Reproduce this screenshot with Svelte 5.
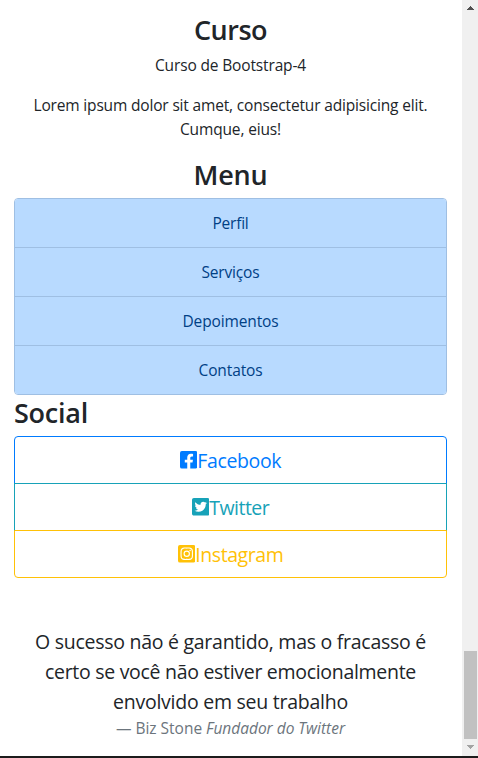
<script>
  const menu = [
    { label: 'Perfil', width: 36 },
    { label: 'Serviços', width: 58 },
    { label: 'Depoimentos', width: 96 },
    { label: 'Contatos', width: 64 },
  ];

  const social = [
    {
      name: 'Facebook',
      kind: 'primary',
      width: 84,
      path: 'M400 32H48A48 48 0 0 0 0 80v352a48 48 0 0 0 48 48h137.25V327.69h-63V256h63v-54.64c0-62.15 37-96.48 93.67-96.48 27.14 0 55.52 4.84 55.52 4.84v61h-31.27c-30.81 0-40.42 19.12-40.42 38.73V256h68.78l-11 71.69h-57.78V480H400a48 48 0 0 0 48-48V80a48 48 0 0 0-48-48z',
    },
    {
      name: 'Twitter',
      kind: 'info',
      width: 60,
      path: 'M400 32H48C21.5 32 0 53.5 0 80v352c0 26.5 21.5 48 48 48h352c26.5 0 48-21.5 48-48V80c0-26.5-21.5-48-48-48zm-48.9 158.8c.2 2.8.2 5.7.2 8.5 0 86.7-66 186.6-186.6 186.6-37.2 0-71.7-10.8-100.7-29.4 5.3.6 10.4.8 15.8.8 30.7 0 58.9-10.4 81.4-28-28.8-.6-53-19.5-61.3-45.5 10.1 1.5 19.2 1.5 29.6-1.2-30-6.1-52.5-32.5-52.5-64.4v-.8c8.7 4.9 18.9 7.9 29.6 8.3a65.447 65.447 0 0 1-29.2-54.6c0-12.2 3.2-23.4 8.9-33.1 32.3 39.8 80.8 65.8 135.2 68.6-9.3-44.5 24-80.6 64-80.6 18.9 0 35.9 7.9 47.9 20.7 14.8-2.8 29-8.3 41.6-15.8-4.9 15.2-15.2 28-28.8 36.1 13.2-1.4 26-5.1 37.8-10.2-8.9 13.1-20.1 24.7-32.9 34z',
    },
    {
      name: 'Instagram',
      kind: 'warning',
      width: 88,
      path: 'M224,202.66A53.34,53.34,0,1,0,277.36,256,53.38,53.38,0,0,0,224,202.66Zm124.71-41a54,54,0,0,0-30.41-30.41c-21-8.29-71-6.43-94.3-6.43s-73.25-1.93-94.31,6.43a54,54,0,0,0-30.41,30.41c-8.28,21-6.43,71.05-6.43,94.33S91,329.26,99.32,350.33a54,54,0,0,0,30.41,30.41c21,8.29,71,6.43,94.31,6.43s73.24,1.93,94.3-6.43a54,54,0,0,0,30.41-30.41c8.35-21,6.43-71.05,6.43-94.33S357.1,182.74,348.75,161.67ZM224,338a82,82,0,1,1,82-82A81.9,81.9,0,0,1,224,338Zm85.38-148.3a19.14,19.14,0,1,1,19.13-19.14A19.1,19.1,0,0,1,309.42,189.74ZM400,32H48A48,48,0,0,0,0,80V432a48,48,0,0,0,48,48H400a48,48,0,0,0,48-48V80A48,48,0,0,0,400,32ZM382.88,322c-1.29,25.63-7.14,48.34-25.85,67s-41.4,24.63-67,25.85c-26.41,1.49-105.59,1.49-132,0-25.63-1.29-48.26-7.15-67-25.85s-24.63-41.42-25.85-67c-1.49-26.42-1.49-105.61,0-132,1.29-25.63,7.07-48.34,25.85-67s41.47-24.56,67-25.78c26.41-1.49,105.59-1.49,132,0,25.63,1.29,48.33,7.15,67,25.85s24.63,41.42,25.85,67.05C384.37,216.44,384.37,295.56,382.88,322Z',
    },
  ];

  const quote = [
    { text: 'O sucesso não é garantido, mas o fracasso é', width: 391 },
    { text: 'certo se você não estiver emocionalmente', width: 371 },
    { text: 'envolvido em seu trabalho', width: 235 },
  ];

  // Tracks a line of text so that it measures the given width.
  function track(node, width) {
    const natural = node.getBoundingClientRect().width;
    node.style.letterSpacing = `${(width - natural) / node.textContent.length}px`;
  }
</script>

<div class="window">
  <div class="view">
    <main>
      <section class="center">
        <h3><span use:track={73}>Curso</span></h3>
        <p><span use:track={151}>Curso de Bootstrap-4</span></p>
        <p>
          <span use:track={394}>Lorem ipsum dolor sit amet, consectetur adipisicing elit.</span><br />
          <span use:track={101}>Cumque, eius!</span>
        </p>
      </section>

      <section class="center">
        <h3><span use:track={74}>Menu</span></h3>
        <nav class="list">
          {#each menu as item}
            <a href="#menu"><span use:track={item.width}>{item.label}</span></a>
          {/each}
        </nav>
      </section>

      <section>
        <h3><span use:track={74}>Social</span></h3>
        <div class="buttons">
          {#each social as item}
            <button class={item.kind}>
              <svg viewBox="0 32 448 448" aria-hidden="true"><path d={item.path} /></svg><span use:track={item.width}>{item.name}</span>
            </button>
          {/each}
        </div>
      </section>

      <blockquote>
        {#each quote as line}
          <div><span use:track={line.width}>{line.text}</span></div>
        {/each}
        <footer><span use:track={229}>— Biz Stone <cite>Fundador do Twitter</cite></span></footer>
      </blockquote>
    </main>

    <div class="scrollbar">
      <svg class="arrow" viewBox="0 0 7 4"><path d="M3 0h1v1h1v1h1v1h1v1H0V3h1V2h1V1h1z" fill="#505050" /></svg>
      <div class="thumb"></div>
      <svg class="arrow" viewBox="0 0 7 4"><path d="M0 0h7v1H6v1H5v1H4v1H3V3H2V2H1V1H0z" fill="#a3a3a3" /></svg>
    </div>
  </div>
  <div class="edge"></div>
</div>

<style>
  :global(body) {
    margin: 0;
    overflow: hidden;
    background: #fff;
  }

  .window {
    display: flex;
    flex-direction: column;
    height: 758px;
    font-family: 'Open Sans', 'Noto Sans', sans-serif;
    font-size: 15.5px;
    line-height: 24px;
    color: #212529;
  }

  .view {
    display: flex;
    flex: 1;
    min-height: 0;
  }

  main {
    flex: 1;
    padding: 12px 15px 0 14px;
  }

  span {
    white-space: nowrap;
  }

  .center {
    text-align: center;
  }

  h3 {
    height: 34px;
    margin: 0 0 7px;
    font-size: 27px;
    font-weight: 600;
    line-height: 36px;
  }

  p {
    margin: 0 0 16px;
  }

  .list {
    display: flex;
    flex-direction: column;
    border: 1px solid #9fbfe3;
    border-radius: 4px;
    overflow: hidden;
  }

  .list a {
    height: 48px;
    line-height: 48px;
    color: #004085;
    background: #b8daff;
    text-decoration: none;
  }

  .list a + a {
    border-top: 1px solid #9fbfe3;
  }

  .buttons {
    display: flex;
    flex-direction: column;
  }

  button {
    display: flex;
    align-items: center;
    justify-content: center;
    box-sizing: border-box;
    height: 48px;
    margin: 0;
    padding: 0;
    font: 19.5px/46px 'Open Sans', 'Noto Sans', sans-serif;
    color: inherit;
    background: transparent;
    border: 1px solid currentColor;
  }

  button span {
    padding-top: 2px;
  }

  button + button {
    margin-top: -1px;
  }

  button:first-child {
    border-radius: 4px 4px 0 0;
  }

  button:last-child {
    border-radius: 0 0 4px 4px;
  }

  button svg {
    width: 17.5px;
    height: 17.5px;
    fill: currentColor;
  }

  .primary {
    color: #007bff;
  }

  .info {
    color: #17a2b8;
  }

  .warning {
    color: #ffc107;
  }

  blockquote {
    margin: 49px 0 0;
    font-size: 19.5px;
    line-height: 30px;
    text-align: center;
  }

  footer {
    margin-top: -1px;
    font-size: 15.5px;
    line-height: 24px;
    color: #6c757d;
  }

  .scrollbar {
    display: flex;
    flex-direction: column;
    align-items: center;
    box-sizing: border-box;
    width: 16px;
    padding: 6px 0 7px;
    background: #f0f0f0;
  }

  .arrow {
    width: 7px;
    height: 4px;
  }

  .thumb {
    width: 13px;
    height: 88px;
    margin: auto 0 6px 1px;
    background: #c1c1c1;
  }

  .edge {
    height: 2px;
    background: #1c1c1c;
  }
</style>
